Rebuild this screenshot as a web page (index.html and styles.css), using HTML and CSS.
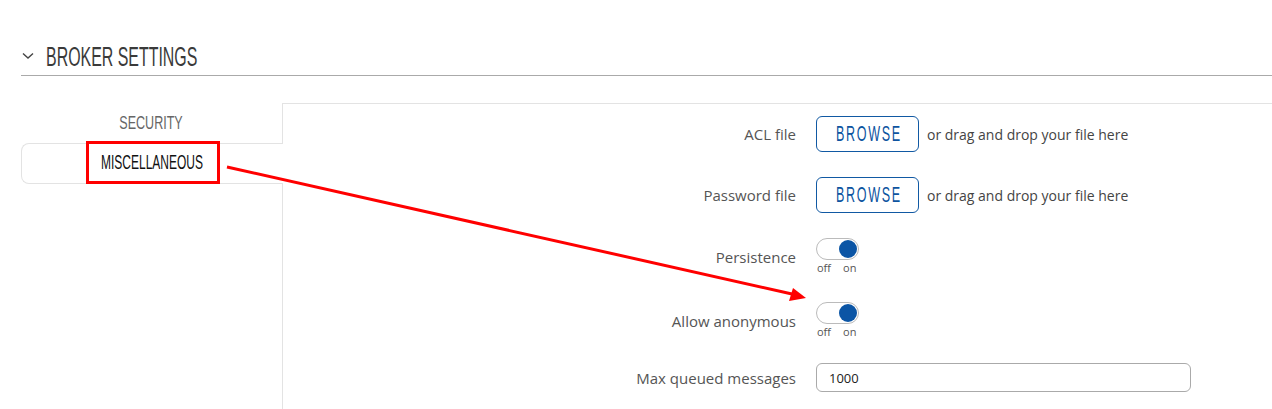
FILE: index.html
```html
<!DOCTYPE html>
<html lang="en">
<head>
    <meta charset="UTF-8">
    <title>Broker settings</title>
    <link rel="stylesheet" href="styles.css">
</head>
<body>

<div class="section">
    <div class="section-head">
        <svg class="chevron" width="12" height="8" viewBox="0 0 12 8">
            <path d="M1 1.5 L6 6 L11 1.5" fill="none" stroke="#444" stroke-width="1.4"/>
        </svg>
        <h2><span class="narrow">BROKER SETTINGS</span></h2>
    </div>

    <div class="section-body">
        <ul class="tabs">
            <li class="tab"><span class="narrow">SECURITY</span></li>
            <li class="tab active"><span class="mark"><span class="narrow">MISCELLANEOUS</span></span></li>
        </ul>

        <div class="panel">
            <div class="row">
                <label>ACL file</label>
                <div class="control">
                    <button class="browse" type="button"><span class="narrow">BROWSE</span></button>
                    <span class="hint">or drag and drop your file here</span>
                </div>
            </div>
            <div class="row">
                <label>Password file</label>
                <div class="control">
                    <button class="browse" type="button"><span class="narrow">BROWSE</span></button>
                    <span class="hint">or drag and drop your file here</span>
                </div>
            </div>
            <div class="row row-switch">
                <label>Persistence</label>
                <div class="control">
                    <div class="switch">
                        <span class="track"><span class="knob"></span></span>
                        <span class="switch-labels"><span>off</span><span>on</span></span>
                    </div>
                </div>
            </div>
            <div class="row row-last">
                <label>Allow anonymous</label>
                <div class="control">
                    <div class="switch">
                        <span class="track"><span class="knob"></span></span>
                        <span class="switch-labels"><span>off</span><span>on</span></span>
                    </div>
                </div>
            </div>
            <div class="row">
                <label>Max queued messages</label>
                <div class="control">
                    <input class="text-input" type="text" value="1000">
                </div>
            </div>
        </div>
    </div>
</div>

<!-- annotation arrow -->
<svg class="annotation" width="1272" height="409" viewBox="0 0 1272 409">
    <line x1="227" y1="167" x2="792" y2="294" stroke="#f00" stroke-width="3"/>
    <polygon points="806,298 789,301 793,288" fill="#f00"/>
</svg>

</body>
</html>
```

FILE: styles.css
```css
body {
    margin: 0;
    font-family: 'Open Sans', sans-serif;
    color: #555;
    background: #fff;
    position: relative;
}
/* no Oswald offline: squeeze Liberation Sans instead */
.narrow {
    display: inline-block;
    font-family: 'Liberation Sans', Arial, sans-serif;
    transform: scaleX(0.6);
    white-space: nowrap;
}
.section {
    padding: 41px 0 0 21px;
}
.section-head {
    display: flex;
    align-items: center;
    height: 28px;
    padding-bottom: 6px;
    border-bottom: 1px solid #aaa;
}
.chevron {
    margin: 2px 12px 0 1px;
}
.section-head h2 {
    margin: 0;
    font-weight: normal;
    font-size: 27px;
    color: #3a3a3a;
}
.section-head h2 .narrow {
    transform-origin: left center;
    transform: scaleX(0.59);
}
.section-body {
    display: flex;
    margin-top: 27px;
}
.tabs {
    list-style: none;
    margin: 0;
    padding: 0;
    width: 261px;
    flex-shrink: 0;
}
.tab {
    height: 40px;
    display: flex;
    align-items: center;
    justify-content: center;
    font-size: 19px;
    color: #666;
}
.tab .narrow {
    transform: scaleX(0.66);
}
.tab.active {
    position: relative;
    z-index: 1;
    height: 39px;
    margin-right: -1px;
    background: #fff;
    border: 1px solid #e3e3e3;
    border-right: none;
    border-radius: 8px 0 0 8px;
    color: #111;
    font-size: 20px;
}
.tab.active .narrow {
    transform: scaleX(0.6);
}
.mark {
    display: flex;
    align-items: center;
    justify-content: center;
    width: 128px;
    height: 37px;
    margin-top: -2px;
    border: 3px solid #f00;
}
.panel {
    flex: 1;
    border-top: 1px solid #e3e3e3;
    border-left: 1px solid #e3e3e3;
    padding-top: 12px;
    height: 310px;
}
.row {
    display: grid;
    grid-template-columns: 513px 1fr;
    column-gap: 20px;
    align-items: center;
    margin-bottom: 25px;
}
.row-switch {
    margin-bottom: 27px;
}
.row-last {
    margin-bottom: 24px;
}
.row label {
    text-align: right;
    font-size: 15px;
    color: #555;
}
.control {
    display: flex;
    align-items: center;
}
.browse {
    display: flex;
    align-items: center;
    justify-content: center;
    width: 103px;
    height: 36px;
    padding: 0;
    background: #fff;
    border: 1px solid #1159a3;
    border-radius: 6px;
    color: #0d54a0;
    font-size: 22px;
    cursor: pointer;
}
.browse .narrow {
    letter-spacing: 3px;
    margin: 0 -10px 0 -7px;
    transform: scaleX(0.57);
}
.hint {
    margin-left: 8px;
    font-size: 14px;
    color: #444;
}
.switch {
    display: flex;
    flex-direction: column;
}
.track {
    display: flex;
    justify-content: flex-end;
    align-items: center;
    width: 41px;
    height: 20px;
    border: 1px solid #bbb;
    border-radius: 11px;
}
.knob {
    width: 18px;
    height: 18px;
    margin-right: 1px;
    border-radius: 50%;
    background: #0b55a5;
}
.switch-labels {
    display: flex;
    gap: 12px;
    padding-left: 1px;
    font-size: 11px;
    line-height: 15px;
    color: #555;
}
.text-input {
    width: 375px;
    height: 29px;
    box-sizing: border-box;
    padding: 0 12px;
    border: 1px solid #aaa;
    border-radius: 6px;
    font-family: 'Open Sans', sans-serif;
    font-size: 13px;
    color: #222;
}
.annotation {
    position: absolute;
    left: 0;
    top: 0;
    z-index: 2;
    pointer-events: none;
}
```
